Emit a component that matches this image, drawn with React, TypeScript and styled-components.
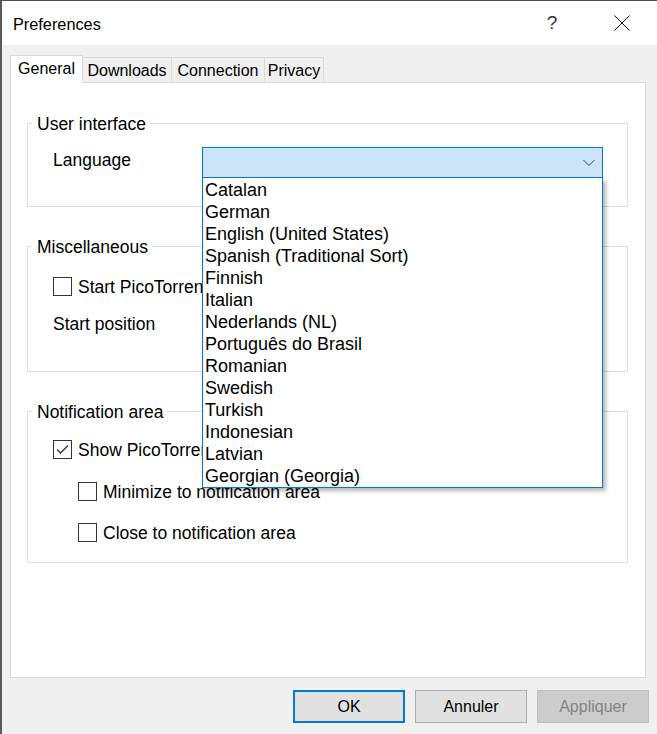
import React from "react";
import styled, { createGlobalStyle } from "styled-components";

const Global = createGlobalStyle`
  html, body { margin: 0; padding: 0; background: #ffffff; overflow: hidden; }
  * { box-sizing: border-box; }
  body { font-family: "Liberation Sans", Arial, sans-serif; color: #000; }
`;

const Window = styled.div`
  width: 657px;
  height: 734px;
  border-top: 1px solid #4f4f4f;
  border-left: 2px solid #5a5a5a;
  display: flex;
  flex-direction: column;
  overflow: hidden;
`;

const TitleBar = styled.div`
  height: 44px;
  flex: none;
  background: #ffffff;
  display: flex;
  align-items: center;
  padding-left: 11px;
`;

const Title = styled.div`
  flex: 1;
  font-size: 16.3px;
  line-height: 20px;
  padding-top: 1px;
`;

const CaptionButton = styled.div`
  width: 70px;
  height: 44px;
  display: flex;
  align-items: center;
  justify-content: center;
  font-size: 19px;
  color: #333;
`;

const Body = styled.div`
  flex: 1;
  background: #f0f0f0;
  padding: 10px 0 0 8px;
  display: flex;
  flex-direction: column;
`;

const TabStrip = styled.div`
  display: flex;
  align-items: flex-end;
  position: relative;
  z-index: 2;
  margin-bottom: -1px;
  height: 28px;
`;

const Tab = styled.div<{ $active?: boolean; $w: number }>`
  width: ${(p) => p.$w}px;
  height: ${(p) => (p.$active ? 28 : 25)}px;
  margin-bottom: ${(p) => (p.$active ? 0 : 1)}px;
  margin-left: ${(p) => (p.$active ? 0 : -1)}px;
  border: 1px solid #d9d9d9;
  border-bottom: none;
  background: ${(p) => (p.$active ? "#ffffff" : "#f0f0f0")};
  font-size: 16px;
  line-height: 20px;
  display: flex;
  align-items: center;
  justify-content: center;
  padding-bottom: ${(p) => (p.$active ? 1 : 0)}px;
  padding-top: ${(p) => (p.$active ? 0 : 1)}px;
  &:first-child { margin-left: 0; }
`;

const Panel = styled.div`
  width: 636px;
  height: 596px;
  flex: none;
  background: #ffffff;
  border: 1px solid #d9d9d9;
  padding: 40px 17px 0 16px;
  display: flex;
  flex-direction: column;
  gap: 39px;
`;

const Group = styled.div<{ $pt: number; $pb: number; $gap?: number }>`
  position: relative;
  border: 1px solid #dcdcdc;
  padding: ${(p) => p.$pt}px 0 ${(p) => p.$pb}px 25px;
  display: flex;
  flex-direction: column;
  gap: ${(p) => p.$gap ?? 0}px;
`;

const Legend = styled.div`
  position: absolute;
  top: -10px;
  left: 4px;
  padding: 0 4px 0 5px;
  background: #ffffff;
  font-size: 17.5px;
  line-height: 20px;
`;

const Row = styled.div<{ $indent?: number; $mt?: number }>`
  height: 30px;
  display: flex;
  align-items: center;
  padding-left: ${(p) => p.$indent ?? 0}px;
  margin-top: ${(p) => p.$mt ?? 0}px;
  font-size: 17.5px;
`;

const FieldLabel = styled.div<{ $lift?: number }>`
  width: 149px;
  flex: none;
  font-size: 17.5px;
  padding-bottom: ${(p) => p.$lift ?? 0}px;
`;

const ComboWrap = styled.div`
  position: relative;
  width: 401px;
  height: 31px;
`;

const Combo = styled.div<{ $open?: boolean }>`
  width: 100%;
  height: 100%;
  border: 1px solid ${(p) => (p.$open ? "#0078d7" : "#7a7a7a")};
  background: ${(p) => (p.$open ? "#cce4f7" : "#ffffff")};
  display: flex;
  align-items: center;
  justify-content: flex-end;
  padding-right: 7px;
`;

const DropList = styled.div`
  position: absolute;
  top: 100%;
  left: 0;
  right: 0;
  z-index: 10;
  background: #ffffff;
  border: 1px solid #0078d7;
  border-top: none;
  padding-top: 1px;
  box-shadow: 3px 3px 4px rgba(0, 0, 0, 0.28);
`;

const DropItem = styled.div`
  height: 22px;
  line-height: 22px;
  padding-left: 2px;
  font-size: 18px;
  white-space: nowrap;
`;

const Box = styled.div`
  width: 19px;
  height: 19px;
  flex: none;
  border: 1px solid #333333;
  background: #ffffff;
  display: flex;
  align-items: center;
  justify-content: center;
  margin-right: 6px;
`;

const CheckLabel = styled.span`
  white-space: nowrap;
  font-size: 17.5px;
  padding-top: 2px;
`;

const ButtonRow = styled.div`
  display: flex;
  justify-content: flex-end;
  gap: 10px;
  margin-top: 12px;
  padding-right: 8px;
`;

const Button = styled.div<{ $variant?: "default" | "disabled" }>`
  width: 112px;
  height: 33px;
  display: flex;
  align-items: center;
  justify-content: center;
  font-size: 16px;
  background: ${(p) => (p.$variant === "disabled" ? "#cccccc" : "#e1e1e1")};
  color: ${(p) => (p.$variant === "disabled" ? "#838383" : "#000")};
  border: ${(p) =>
    p.$variant === "default"
      ? "2px solid #0078d7"
      : p.$variant === "disabled"
      ? "1px solid #bfbfbf"
      : "1px solid #adadad"};
`;

const Chevron = () => (
  <svg width="12" height="8" viewBox="0 0 12 8">
    <polyline points="0.5,1 6,6.5 11.5,1" fill="none" stroke="#404040" strokeWidth="1" />
  </svg>
);

const CloseIcon = () => (
  <svg width="16" height="16" viewBox="0 0 16 16">
    <path d="M0.5 0.5 L15.5 15.5 M15.5 0.5 L0.5 15.5" stroke="#111" strokeWidth="1" fill="none" />
  </svg>
);

const CheckBox = ({ checked }: { checked?: boolean }) => (
  <Box>
    {checked && (
      <svg width="13" height="11" viewBox="0 0 13 11">
        <polyline points="1,5.5 4.5,9 12,1.5" fill="none" stroke="#333" strokeWidth="1.3" />
      </svg>
    )}
  </Box>
);

const languages = [
  "Catalan",
  "German",
  "English (United States)",
  "Spanish (Traditional Sort)",
  "Finnish",
  "Italian",
  "Nederlands (NL)",
  "Português do Brasil",
  "Romanian",
  "Swedish",
  "Turkish",
  "Indonesian",
  "Latvian",
  "Georgian (Georgia)",
];

export default function App() {
  return (
    <>
      <Global />
      <Window>
        <TitleBar>
          <Title>Preferences</Title>
          <CaptionButton>?</CaptionButton>
          <CaptionButton>
            <CloseIcon />
          </CaptionButton>
        </TitleBar>
        <Body>
          <TabStrip>
            <Tab $active $w={73}>General</Tab>
            <Tab $w={90}>Downloads</Tab>
            <Tab $w={94}>Connection</Tab>
            <Tab $w={60}>Privacy</Tab>
          </TabStrip>
          <Panel>
            <Group $pt={23} $pb={28}>
              <Legend>User interface</Legend>
              <Row style={{ height: 31 }}>
                <FieldLabel $lift={4}>Language</FieldLabel>
                <ComboWrap>
                  <Combo $open>
                    <Chevron />
                  </Combo>
                  <DropList>
                    {languages.map((l) => (
                      <DropItem key={l}>{l}</DropItem>
                    ))}
                  </DropList>
                </ComboWrap>
              </Row>
            </Group>
            <Group $pt={24} $pb={32} $gap={8}>
              <Legend>Miscellaneous</Legend>
              <Row>
                <CheckBox />
                <CheckLabel>Start PicoTorrent with Windows</CheckLabel>
              </Row>
              <Row>
                <FieldLabel>Start position</FieldLabel>
                <ComboWrap>
                  <Combo>
                    <Chevron />
                  </Combo>
                </ComboWrap>
              </Row>
            </Group>
            <Group $pt={22} $pb={15}>
              <Legend>Notification area</Legend>
              <Row>
                <CheckBox checked />
                <CheckLabel>Show PicoTorrent in notification area</CheckLabel>
              </Row>
              <Row $indent={25} $mt={12}>
                <CheckBox />
                <CheckLabel>Minimize to notification area</CheckLabel>
              </Row>
              <Row $indent={25} $mt={11}>
                <CheckBox />
                <CheckLabel>Close to notification area</CheckLabel>
              </Row>
            </Group>
          </Panel>
          <ButtonRow>
            <Button $variant="default">OK</Button>
            <Button>Annuler</Button>
            <Button $variant="disabled">Appliquer</Button>
          </ButtonRow>
        </Body>
      </Window>
    </>
  );
}
